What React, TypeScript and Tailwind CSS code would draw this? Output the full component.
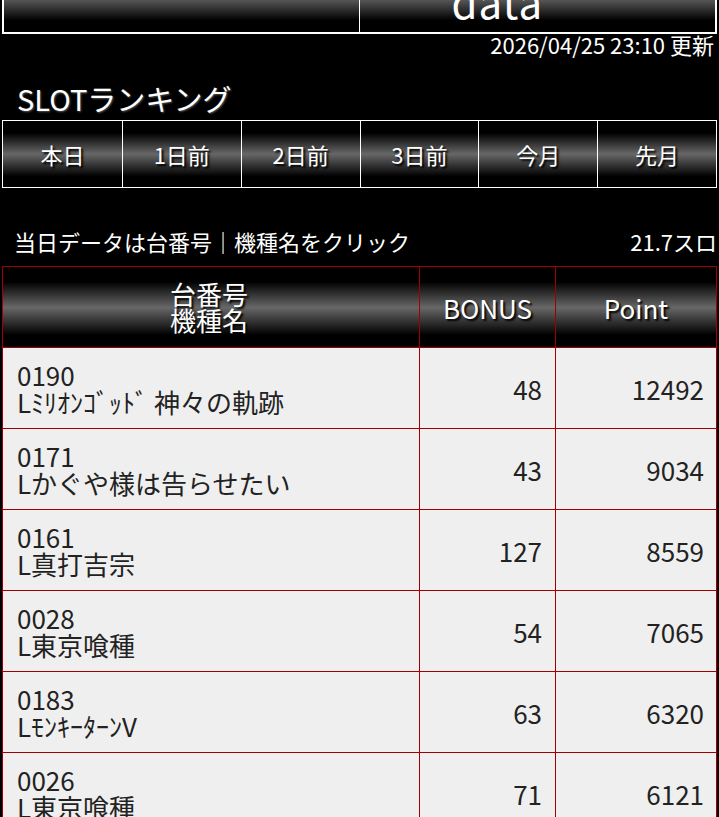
const TABS = ['本日', '1日前', '2日前', '3日前', '今月', '先月'];

const ROWS = [
  { no: '0190', name: 'Lﾐﾘｵﾝｺﾞｯﾄﾞ 神々の軌跡', bonus: 48, point: 12492 },
  { no: '0171', name: 'Lかぐや様は告らせたい', bonus: 43, point: 9034 },
  { no: '0161', name: 'L真打吉宗', bonus: 127, point: 8559 },
  { no: '0028', name: 'L東京喰種', bonus: 54, point: 7065 },
  { no: '0183', name: 'LﾓﾝｷｰﾀｰﾝV', bonus: 63, point: 6320 },
  { no: '0026', name: 'L東京喰種', bonus: 71, point: 6121 },
];

const glossy = 'bg-[linear-gradient(to_bottom,#000_18%,#676767_50%,#000_84%)]';
const shadow = '[text-shadow:2px_2px_2px_#000]';

export default function App() {
  return (
    <div className="min-h-screen overflow-hidden bg-black px-[2px] font-['Noto_Sans_CJK_JP','Noto_Sans',sans-serif] text-white">
      {/* top nav, mostly scrolled off */}
      <div className={`-mt-[40px] grid h-[74px] grid-cols-2 border-2 border-t-0 border-white ${glossy}`}>
        <div className="flex items-end justify-center border-r border-white pb-[30px] pr-[140px] text-[30px] leading-none">
          TOP
        </div>
        <div className="flex items-end justify-center pb-[10px] pr-[80px] text-[42px] leading-none tracking-wide">
          data
        </div>
      </div>
      <div className="-mt-[3px] pr-[3px] text-right text-[22px] leading-[26px]">2026/04/25 23:10 更新</div>

      <h2 className="mt-[23px] pl-[15px] text-[29px] leading-[36px] [text-shadow:1px_1px_2px_#555]">SLOTランキング</h2>

      <div className="mt-[4px] grid h-[68px] grid-cols-6 border border-white">
        {TABS.map((t, i) => (
          <div
            key={t}
            className={`flex items-center justify-center text-[22px] ${glossy} ${shadow} ${i > 0 ? 'border-l border-white' : ''}`}
          >
            {t}
          </div>
        ))}
      </div>

      <div className="mt-[38px] flex items-center justify-between pl-[12px] text-[22px] leading-[30px]">
        <span>当日データは台番号｜機種名をクリック</span>
        <span>21.7スロ</span>
      </div>

      <table className="mt-[10px] w-full border-collapse border border-[#a00000] text-[26px]">
        <thead>
          <tr className={`h-[81px] ${glossy} ${shadow}`}>
            <th className="w-[417px] border border-[#a00000] pr-[4px] text-center font-normal leading-[26px]">
              台番号
              <br />
              機種名
            </th>
            <th className="w-[136px] border border-[#a00000] text-center font-normal">BONUS</th>
            <th className="border border-[#a00000] text-center font-normal">Point</th>
          </tr>
        </thead>
        <tbody className="bg-[#efefef] text-[#222]">
          {ROWS.map((r) => (
            <tr key={r.no} className="h-[81px]">
              <td className="border border-[#a00000] pl-[14px] leading-[27px]">
                <div>{r.no}</div>
                <div>{r.name}</div>
              </td>
              <td className="border border-[#a00000] pr-[13px] text-right">{r.bonus}</td>
              <td className="border border-[#a00000] pr-[12px] text-right">{r.point}</td>
            </tr>
          ))}
        </tbody>
      </table>
    </div>
  );
}
